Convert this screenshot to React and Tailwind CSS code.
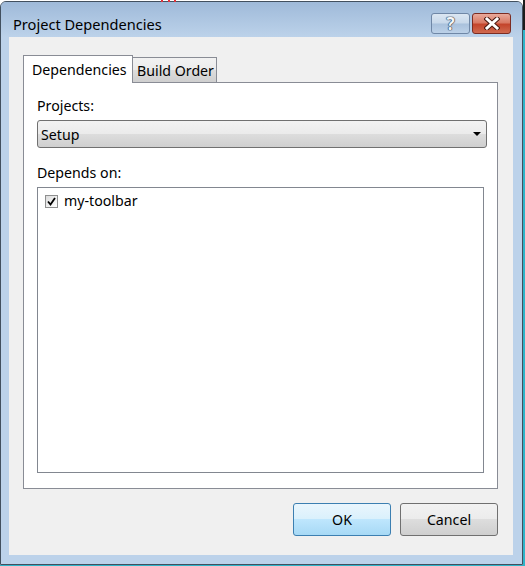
export default function App() {
    return (
        <div className="w-[525px] h-[566px] bg-white overflow-hidden font-['Noto_Sans',sans-serif] text-[14.2px] text-black whitespace-nowrap relative">
            {/* desktop bits behind the window */}
            <div className="absolute top-0 left-[161px] w-[2px] h-[2px] bg-[#e0303a]"></div>
            <div className="absolute top-0 left-[168px] w-[2px] h-[2px] bg-[#e0303a]"></div>
            <div className="absolute top-0 left-[174px] w-[2px] h-[2px] bg-[#e0303a]"></div>
            <div className="absolute bottom-0 left-0 right-0 h-[1px] bg-[#2fb4c9]"></div>
            <div className="absolute top-[30px] bottom-0 right-0 w-[2px] bg-[#2fb4c9]"></div>
            <div className="absolute top-0 h-[30px] right-0 w-[2px] bg-[#1c1c1c]"></div>

            {/* Window */}
            <div className="mt-[1px] w-[523px] h-[564px] border border-[#42505f] rounded-t-[6px] bg-[#bcd2ea] flex flex-col">
                {/* Title bar */}
                <div className="h-[35px] flex items-start rounded-t-[5px] bg-gradient-to-b from-[#9fbad9] to-[#bcd2ea]">
                    <div className="pl-[12px] pt-[12px] leading-[20px] text-[14.6px] flex-1">Project Dependencies</div>
                    <div className="flex gap-[2px] mt-[11px] mr-[11px]">
                        <div className="w-[39px] h-[21px] rounded-[3px] border border-[#6f87a6] flex items-center justify-center bg-[linear-gradient(to_bottom,#dbe6f2_0%,#c7d8ea_48%,#a9c1dc_52%,#bcd1e8_100%)]">
                            <span className="text-[#f4f6f9] font-bold text-[17px] leading-none [text-shadow:0_0_1px_#1f2e40,0_0_1px_#1f2e40,0_0_1px_#1f2e40]">?</span>
                        </div>
                        <div className="w-[39px] h-[21px] rounded-[3px] border border-[#7c2c22] flex items-center justify-center bg-[linear-gradient(to_bottom,#e9a99b_0%,#d97a65_45%,#c4452c_55%,#d06a4f_100%)]">
                            <svg width="16" height="13" viewBox="0 0 16 13">
                                <path d="M3 2 L13 11 M13 2 L3 11" stroke="#4a1a12" strokeWidth="5" strokeLinecap="square" />
                                <path d="M3 2 L13 11 M13 2 L3 11" stroke="#ffffff" strokeWidth="3" strokeLinecap="square" />
                            </svg>
                        </div>
                    </div>
                </div>

                {/* Client area */}
                <div className="mx-[8px] mr-[9px] h-[518px] bg-[#f0f0f0] pl-[14px] pt-[18px] flex flex-col">
                    {/* Tabs */}
                    <div className="h-[27px] flex items-start">
                        <div className="relative z-10 w-[110px] h-[28px] bg-white border-l border-t border-r border-[#898c95] pl-[8px] pt-[4px] leading-[20px]">
                            Dependencies
                        </div>
                        <div className="-ml-px mt-[2px] w-[85px] h-[25px] border-t border-r border-[#898c95] bg-[linear-gradient(to_bottom,#f2f2f2_0%,#ebebeb_50%,#dddddd_50%,#cfcfcf_100%)] pl-[5px] pt-[3px] leading-[20px]">
                            Build Order
                        </div>
                    </div>

                    {/* Panel */}
                    <div className="w-[475px] h-[407px] bg-white border border-[#898c95] pl-[13px] pt-[13px] flex flex-col">
                        <div className="leading-[20px]">Projects:</div>
                        <div className="mt-[4px] w-[450px] h-[28px] rounded-[3px] border border-[#707070] bg-[linear-gradient(to_bottom,#f2f2f2_0%,#ebebeb_50%,#dddddd_50%,#cfcfcf_100%)] flex items-center pl-[3px] pr-[5px]">
                            <span className="flex-1 leading-[20px] pt-[1px]">Setup</span>
                            <span className="w-0 h-0 border-l-[4px] border-r-[4px] border-t-[4px] border-l-transparent border-r-transparent border-t-black"></span>
                        </div>
                        <div className="mt-[15px] leading-[20px]">Depends on:</div>
                        <div className="mt-[4px] w-[447px] h-[286px] border border-[#828790] bg-white pl-[7px] pt-[3px]">
                            <div className="flex items-center h-[20px]">
                                <div className="w-[13px] h-[13px] border border-[#8e8f8f] bg-[linear-gradient(135deg,#dcdcdc,#ffffff)] flex items-center justify-center">
                                    <svg width="9" height="9" viewBox="0 0 9 9">
                                        <path d="M1 4.5 L3.5 7.5 L8 1" fill="none" stroke="#000" strokeWidth="1.8" />
                                    </svg>
                                </div>
                                <span className="ml-[6px] leading-[20px]">my-toolbar</span>
                            </div>
                        </div>
                    </div>

                    {/* Buttons */}
                    <div className="w-[475px] mt-[14px] flex justify-end gap-[9px]">
                        <button className="w-[98px] h-[33px] rounded-[3px] border border-[#3c7fb1] bg-[linear-gradient(to_bottom,#eaf6fd_0%,#d9f0fc_50%,#bee6fd_50%,#a7d9f5_100%)] leading-[20px]">
                            OK
                        </button>
                        <button className="w-[98px] h-[33px] rounded-[3px] border border-[#707070] bg-[linear-gradient(to_bottom,#f2f2f2_0%,#ebebeb_50%,#dddddd_50%,#cfcfcf_100%)] leading-[20px]">
                            Cancel
                        </button>
                    </div>
                </div>
            </div>
        </div>
    );
}
